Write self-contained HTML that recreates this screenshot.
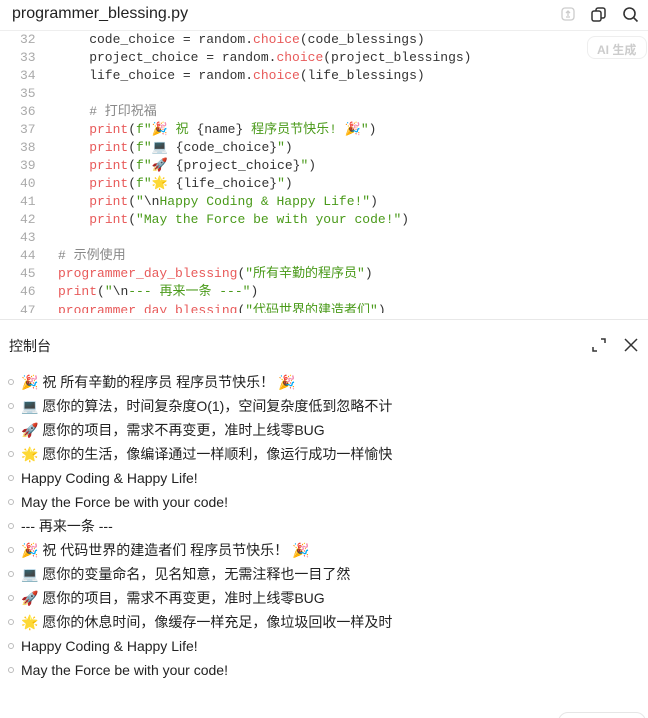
<!DOCTYPE html>
<html><head><meta charset="utf-8"><style>
*{margin:0;padding:0;box-sizing:border-box}
html,body{width:648px;height:718px;overflow:hidden}
body{background:#fff;position:relative;font-family:"Liberation Sans","Noto Sans CJK SC",sans-serif;color:#222}
.title{position:absolute;left:12px;top:5px;font-size:16px;color:#222}
.hdr{position:absolute;left:0;top:30px;width:648px;border-top:1px solid #eee}
.code{position:absolute;left:0;top:31px;width:648px;height:282px;overflow:hidden}
.ln{position:absolute;left:0;width:648px;height:18px;font-family:"Liberation Mono","Noto Sans CJK SC",monospace;font-size:13px;line-height:18px;white-space:pre;color:#333}
.ln .n{position:absolute;left:20px;color:#aaa}
.ln .c{position:absolute;left:58px}
.f{color:#e85a5a}.s{color:#4a9a1a}.cm{color:#888}
.ai{position:absolute;left:587px;top:36px;width:60px;height:23px;border:1px solid #eee;border-radius:8px;color:#ccc;font-size:12px;font-weight:bold;padding:4px 0 0 9px}
.sep{position:absolute;left:0;top:319px;width:648px;border-top:1px solid #e8e8e8}
.con{position:absolute;left:9px;top:336px;font-size:14px}
.out{position:absolute;left:0;width:648px;font-size:14px;line-height:24px;height:24px}
.out .b{position:absolute;left:8px;top:9px;width:6px;height:6px;border:1px solid #bbb;border-radius:50%}
.out .t{position:absolute;left:21px}
</style></head><body>
<div class="title">programmer_blessing.py</div>
<svg style="position:absolute;left:560px;top:6px" width="16" height="16" viewBox="0 0 16 16" fill="none" stroke="#ccc" stroke-width="1.3"><rect x="2" y="2" width="12" height="12" rx="3"/><path d="M8 5v5M6 7l2-2 2 2M6 11h4"/></svg>
<svg style="position:absolute;left:590px;top:6px" width="17" height="17" viewBox="0 0 17 17" fill="none" stroke="#333" stroke-width="1.5"><rect x="2" y="5" width="9" height="10" rx="2"/><path d="M6 5V4a2 2 0 0 1 2-2h5a2 2 0 0 1 2 2v6a2 2 0 0 1-2 2h-2"/></svg>
<svg style="position:absolute;left:622px;top:6px" width="17" height="17" viewBox="0 0 17 17" fill="none" stroke="#333" stroke-width="1.6"><circle cx="7.5" cy="7.5" r="5.5"/><path d="M11.5 11.5l4 4"/></svg>
<div class="hdr"></div>
<div class="code">
<div class="ln" style="top:0"><span class="n">32</span><span class="c">    code_choice = random.<span class="f">choice</span>(code_blessings)</span></div>
<div class="ln" style="top:18px"><span class="n">33</span><span class="c">    project_choice = random.<span class="f">choice</span>(project_blessings)</span></div>
<div class="ln" style="top:36px"><span class="n">34</span><span class="c">    life_choice = random.<span class="f">choice</span>(life_blessings)</span></div>
<div class="ln" style="top:54px"><span class="n">35</span></div>
<div class="ln" style="top:72px"><span class="n">36</span><span class="c cm">    # 打印祝福</span></div>
<div class="ln" style="top:90px"><span class="n">37</span><span class="c">    <span class="f">print</span>(<span class="s">f"🎉 祝 </span>{name}<span class="s"> 程序员节快乐! 🎉"</span>)</span></div>
<div class="ln" style="top:108px"><span class="n">38</span><span class="c">    <span class="f">print</span>(<span class="s">f"💻 </span>{code_choice}<span class="s">"</span>)</span></div>
<div class="ln" style="top:126px"><span class="n">39</span><span class="c">    <span class="f">print</span>(<span class="s">f"🚀 </span>{project_choice}<span class="s">"</span>)</span></div>
<div class="ln" style="top:144px"><span class="n">40</span><span class="c">    <span class="f">print</span>(<span class="s">f"🌟 </span>{life_choice}<span class="s">"</span>)</span></div>
<div class="ln" style="top:162px"><span class="n">41</span><span class="c">    <span class="f">print</span>(<span class="s">"</span>\n<span class="s">Happy Coding &amp; Happy Life!"</span>)</span></div>
<div class="ln" style="top:180px"><span class="n">42</span><span class="c">    <span class="f">print</span>(<span class="s">"May the Force be with your code!"</span>)</span></div>
<div class="ln" style="top:198px"><span class="n">43</span></div>
<div class="ln" style="top:216px"><span class="n">44</span><span class="c cm"># 示例使用</span></div>
<div class="ln" style="top:234px"><span class="n">45</span><span class="c"><span class="f">programmer_day_blessing</span>(<span class="s">"所有辛勤的程序员"</span>)</span></div>
<div class="ln" style="top:252px"><span class="n">46</span><span class="c"><span class="f">print</span>(<span class="s">"</span>\n<span class="s">--- 再来一条 ---"</span>)</span></div>
<div class="ln" style="top:271px"><span class="n">47</span><span class="c"><span class="f">programmer_day_blessing</span>(<span class="s">"代码世界的建造者们"</span>)</span></div>
</div>
<div class="ai">AI 生成</div>
<div class="sep"></div>
<div class="con">控制台</div>
<svg style="position:absolute;left:591px;top:337px" width="16" height="16" viewBox="0 0 16 16" fill="none" stroke="#333" stroke-width="1.5"><path d="M10 2h4v4M2 10v4h4"/></svg>
<svg style="position:absolute;left:623px;top:337px" width="16" height="16" viewBox="0 0 16 16" fill="none" stroke="#333" stroke-width="1.5"><path d="M2 2l12 12M14 2L2 14"/></svg>
<div class="out" style="top:370px"><span class="b"></span><span class="t">🎉 祝 所有辛勤的程序员 程序员节快乐！ 🎉</span></div>
<div class="out" style="top:394px"><span class="b"></span><span class="t">💻 愿你的算法，时间复杂度O(1)，空间复杂度低到忽略不计</span></div>
<div class="out" style="top:418px"><span class="b"></span><span class="t">🚀 愿你的项目，需求不再变更，准时上线零BUG</span></div>
<div class="out" style="top:442px"><span class="b"></span><span class="t">🌟 愿你的生活，像编译通过一样顺利，像运行成功一样愉快</span></div>
<div class="out" style="top:466px"><span class="b"></span><span class="t">Happy Coding &amp; Happy Life!</span></div>
<div class="out" style="top:490px"><span class="b"></span><span class="t">May the Force be with your code!</span></div>
<div class="out" style="top:514px"><span class="b"></span><span class="t">--- 再来一条 ---</span></div>
<div class="out" style="top:538px"><span class="b"></span><span class="t">🎉 祝 代码世界的建造者们 程序员节快乐！ 🎉</span></div>
<div class="out" style="top:562px"><span class="b"></span><span class="t">💻 愿你的变量命名，见名知意，无需注释也一目了然</span></div>
<div class="out" style="top:586px"><span class="b"></span><span class="t">🚀 愿你的项目，需求不再变更，准时上线零BUG</span></div>
<div class="out" style="top:610px"><span class="b"></span><span class="t">🌟 愿你的休息时间，像缓存一样充足，像垃圾回收一样及时</span></div>
<div class="out" style="top:634px"><span class="b"></span><span class="t">Happy Coding &amp; Happy Life!</span></div>
<div class="out" style="top:658px"><span class="b"></span><span class="t">May the Force be with your code!</span></div>
<div style="position:absolute;left:558px;top:712px;width:88px;height:20px;border:1px solid #e6e6e6;border-radius:10px"></div>
</body></html>
